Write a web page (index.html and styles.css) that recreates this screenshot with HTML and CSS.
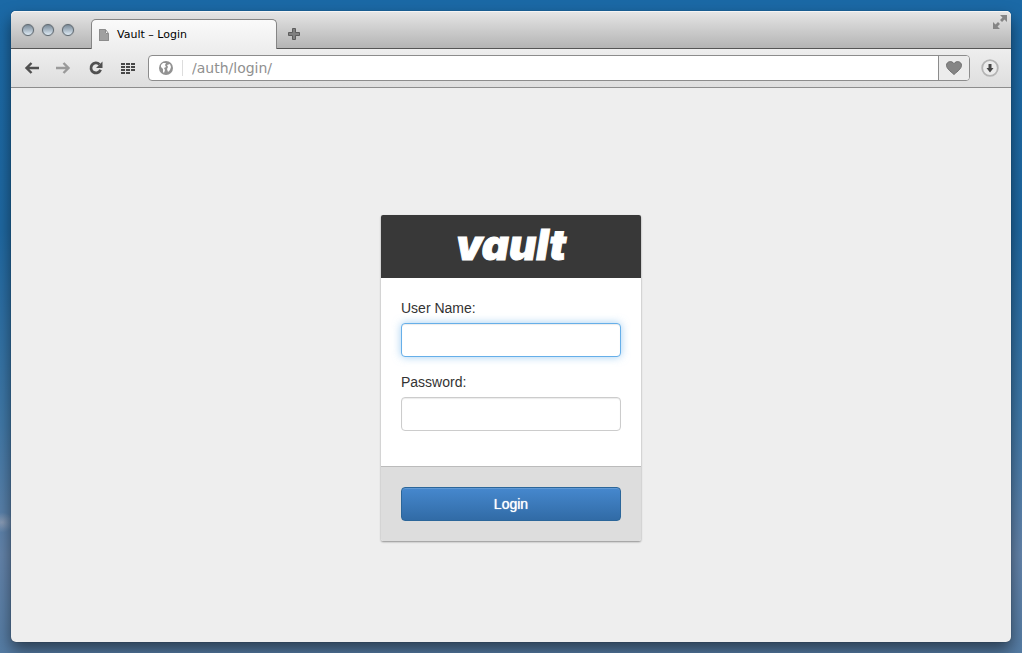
FILE: index.html
```html
<!DOCTYPE html>
<html lang="en">
<head>
<meta charset="utf-8">
<meta name="viewport" content="width=device-width, initial-scale=1">
<title>Vault – Login</title>
<link rel="stylesheet" href="styles.css">
</head>
<body>
<div class="window">
  <header class="tabstrip">
    <div class="lights">
      <button class="light" aria-label="Close"></button>
      <button class="light" aria-label="Minimize"></button>
      <button class="light" aria-label="Zoom"></button>
    </div>
    <div class="tab">
      <svg width="10" height="12" viewBox="0 0 10 12" aria-hidden="true"><path d="M0 0h6v5h4v7H0z" fill="#a0a0a0"/><path d="M0.500 12V.500H6.500V4.500H9.500V11.500H0" fill="none" stroke="#8c8c8c"/><path d="M6.500 .5l3 4" stroke="#8c8c8c"/></svg>
      <span>Vault – Login</span>
    </div>
    <button class="icon-button new-tab" aria-label="New tab">
      <svg width="12" height="12" viewBox="0 0 12 12"><path d="M4.500 .5h3v4h4v3h-4v4h-3v-4h-4v-3h4z" fill="#808080" stroke="#5c5c5c"/></svg>
    </button>
    <button class="icon-button fullscreen" aria-label="Full screen">
      <svg width="14" height="14" viewBox="0 0 14 14" fill="#858585"><path d="M7 0h7v7l-2.500-2.500-2.500 2.500-2-2 2.500-2.500z"/><path d="M0 7l2.500 2.500 2.500-2.500 2 2-2.500 2.500 2.500 2.500H0z"/></svg>
    </button>
  </header>
  <nav class="toolbar" aria-label="Browser">
    <button class="icon-button" aria-label="Back">
      <svg width="16" height="14" viewBox="0 0 16 14"><path d="M7.500 2L2.500 7l5 5M3 7h12" fill="none" stroke="#505050" stroke-width="2.400"/></svg>
    </button>
    <button class="icon-button" aria-label="Forward">
      <svg width="16" height="14" viewBox="0 0 16 14"><path d="M8.500 2l5 5-5 5M13 7H1" fill="none" stroke="#9a9a9a" stroke-width="2.400"/></svg>
    </button>
    <button class="icon-button reload" aria-label="Reload">
      <svg width="14" height="14" viewBox="0 0 14 14"><path d="M10.500 3.400A5 5 0 1 0 11.600 8.800" fill="none" stroke="#505050" stroke-width="2.800"/><path d="M13.500 .5v6.500H7z" fill="#505050"/></svg>
    </button>
    <button class="icon-button" aria-label="Speed dial">
      <svg width="15" height="11" viewBox="0 0 15 11" fill="#484848"><path d="M0 0h4v2H0zM5 0h4v2H5zM10 0h4v2h-4zM0 3h4v2H0zM5 3h4v2H5zM10 3h4v2h-4zM0 6h4v2H0zM5 6h4v2H5zM10 6h4v2h-4zM0 9h4v2H0zM5 9h4v2H5z"/></svg>
    </button>
    <div class="address">
      <svg class="globe" width="14" height="14" viewBox="0 0 14 14"><circle cx="7" cy="7" r="7" fill="#929292"/><path d="M2 4l2-2 3 0-1 2 1 2-2 1 1 2-1 3-1-1V8L2 6zM8 4l3-1 1 3-1 3-2 2-1-3 1-2z" fill="#fff"/></svg>
      <input class="url" type="text" value="/auth/login/" aria-label="Address">
      <button class="bookmark" aria-label="Bookmark">
        <svg width="16" height="14" viewBox="0 0 16 14"><path d="M8 13.500C4 10 .5 7.500 .5 4.300 .5 .6 5.500-.9 8 2.600c2.500-3.500 7.500-2 7.500 1.700C15.500 7.500 12 10 8 13.500z" fill="#858585" stroke="#707070"/></svg>
      </button>
    </div>
    <button class="icon-button" aria-label="Downloads">
      <svg width="18" height="18" viewBox="0 0 18 18"><circle cx="9" cy="9" r="7.800" fill="#ececec" stroke="#b4b4b4" stroke-width="1.800"/><path d="M7.500 5h3v4h2L9 13.500 5.500 9h2z" fill="#484848"/></svg>
    </button>
  </nav>
  <main class="page">
    <form class="card">
      <h1 class="brand">vault</h1>
      <div class="fields">
        <div class="field">
          <label for="user">User Name:</label>
          <input class="text-input is-active" id="user" type="text">
        </div>
        <div class="field">
          <label for="password">Password:</label>
          <input class="text-input" id="password" type="password">
        </div>
      </div>
      <div class="actions">
        <button class="submit" type="submit">Login</button>
      </div>
    </form>
  </main>
</div>
</body>
</html>
```
FILE: styles.css
```css
* { box-sizing: border-box; }

body {
  margin: 0;
  min-height: 100vh;
  padding: 11px;
  display: flex;
  background:
    radial-gradient(ellipse 12px 10px at 2px 80%, rgba(170, 175, 190, .6), transparent),
    linear-gradient(#1b69a6, #1f68a1 35%, #4179a8 65%, #6484ab 85%, #557ca4);
  font-family: "Liberation Sans", Arial, sans-serif;
  font-size: 14px;
  line-height: 20px;
  color: #333;
}

button { margin: 0; padding: 0; border: 0; background: none; font: inherit; }
svg { display: block; }

.window {
  flex: 1;
  display: flex;
  flex-direction: column;
  border-radius: 5px;
  background: #eee;
  box-shadow: 0 0 1px rgba(0, 0, 0, .6), 0 8px 16px rgba(0, 0, 0, .5);
}

.tabstrip {
  display: flex;
  height: 38px;
  border-bottom: 1px solid #555;
  border-radius: 5px 5px 0 0;
  background: linear-gradient(#e6e6e6, #b4b4b4);
  box-shadow: inset 0 1px #f4f4f4;
}

.lights { display: flex; gap: 8px; width: 80px; padding: 13px 0 0 11px; }

.light {
  width: 12px;
  height: 12px;
  border: 1px solid #5e6870;
  border-radius: 50%;
  background: linear-gradient(#7c8c99, #a9b8c5 50%, #e0ecf5);
  box-shadow: 0 0 1px #7c8084;
}

.tab {
  display: flex;
  align-items: center;
  gap: 8px;
  width: 186px;
  height: 30px;
  margin-top: 8px;
  padding: 0 7px;
  border: 1px solid #858585;
  border-bottom: 0;
  border-radius: 5px 5px 0 0;
  background: linear-gradient(#fafafa, #eee);
  font: 11px/16px "DejaVu Sans", sans-serif;
  color: #000;
}

.icon-button { display: flex; align-items: center; justify-content: center; }
.new-tab { width: 34px; padding-top: 8px; }
.fullscreen { align-self: flex-start; margin: 4px 4px 0 auto; }

.toolbar {
  display: flex;
  align-items: center;
  gap: 15px;
  height: 39px;
  padding: 0 12px 0 13px;
  border-bottom: 1px solid #8d8d8d;
  background: linear-gradient(#eee, #dedede);
}

.reload { margin: 0 3px; }

.address {
  flex: 1;
  display: flex;
  align-items: center;
  height: 26px;
  margin-right: -4px;
  margin-left: -3px;
  border: 1px solid #8c8c8c;
  border-radius: 4px;
  background: #fff;
  overflow: hidden;
}

.globe { margin: 0 9px 0 10px; }

.url {
  flex: 1;
  min-width: 0;
  height: 16px;
  padding: 0 0 0 9px;
  border: 0;
  border-left: 1px solid #ddd;
  outline: 0;
  font: 14px/16px "DejaVu Sans", sans-serif;
  color: #909090;
}

.bookmark {
  display: grid;
  place-items: center;
  align-self: stretch;
  width: 31px;
  border-left: 1px solid #8c8c8c;
  background: #ececec;
}

.page {
  flex: 1;
  display: flex;
  align-items: center;
  justify-content: center;
  padding-top: 26px;
}

.card {
  width: 260px;
  border-radius: 2px;
  background: #fff;
  box-shadow: 0 1px 2px rgba(0, 0, 0, .4);
}

.brand {
  margin: 0;
  height: 63px;
  border-radius: 2px 2px 0 0;
  background: #383838;
  color: #fff;
  font: italic 900 42px/60px Inter, sans-serif;
  -webkit-text-stroke: 1px #fff;
  text-align: center;
}

.fields { padding: 20px 20px 35px; display: grid; gap: 15px; }
.field { display: grid; gap: 5px; }

.text-input {
  width: 100%;
  height: 34px;
  padding: 6px 12px;
  border: 1px solid #ccc;
  border-radius: 4px;
  background: #fff;
  box-shadow: inset 0 1px 1px rgba(0, 0, 0, .08);
  font: inherit;
  outline: 0;
}

.text-input.is-active,
.text-input:focus {
  border-color: #66afe9;
  box-shadow: inset 0 1px 1px rgba(0, 0, 0, .08), 0 0 8px rgba(102, 175, 233, .6);
}

.actions {
  padding: 20px;
  border-top: 1px solid #bbb;
  border-radius: 0 0 2px 2px;
  background: #ddd;
}

.submit {
  width: 100%;
  height: 34px;
  border: 1px solid #2b669a;
  border-radius: 4px;
  background: linear-gradient(#4688ce, #316ba6);
  box-shadow: inset 0 1px rgba(255, 255, 255, .15);
  color: #fff;
  text-shadow: 0 0 1px #fff;
}
```
